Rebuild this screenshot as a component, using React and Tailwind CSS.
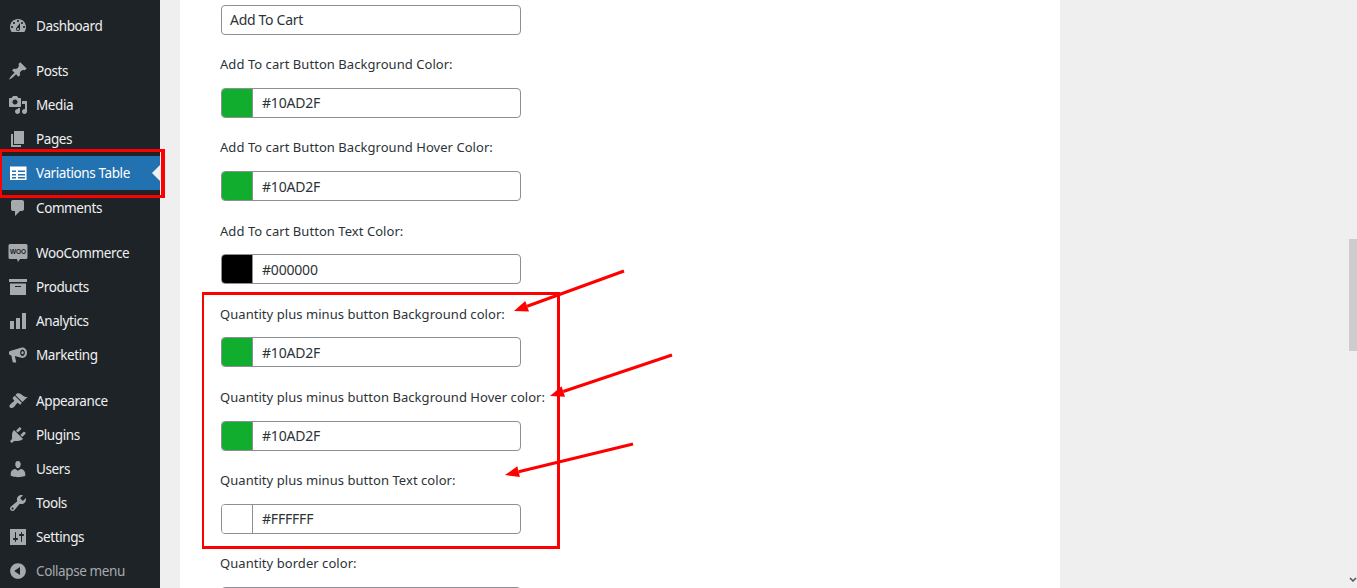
const font = { fontFamily: '"Noto Sans", "Open Sans", sans-serif' };

const P = ({ d, className = "" }) => (
  <svg viewBox="0 0 20 20" className={`w-5 h-5 fill-[#a7aaad] ${className}`}><path d={d} fillRule="evenodd" /></svg>
);

const icons = {
  dashboard: <P d="M3.76 16h12.48c1.1-1.37 1.76-3.11 1.76-5 0-4.42-3.58-8-8-8s-8 3.58-8 8c0 1.89.66 3.63 1.76 5zM10 4c.55 0 1 .45 1 1s-.45 1-1 1-1-.45-1-1 .45-1 1-1zM6 6c.55 0 1 .45 1 1s-.45 1-1 1-1-.45-1-1 .45-1 1-1zm8 0c.55 0 1 .45 1 1s-.45 1-1 1-1-.45-1-1 .45-1 1-1zm-5.37 5.55L12 7v6c0 1.1-.9 2-2 2s-2-.9-2-2c0-.57.24-1.08.63-1.45zM4 10c.55 0 1 .45 1 1s-.45 1-1 1-1-.45-1-1 .45-1 1-1zm12 0c.55 0 1 .45 1 1s-.45 1-1 1-1-.45-1-1 .45-1 1-1zm-5 3c0-.55-.45-1-1-1s-1 .45-1 1 .45 1 1 1 1-.45 1-1z" />,
  posts: <P d="M10.44 3.02l1.82-1.82 6.36 6.35-1.83 1.82c-1.05-.68-2.48-.57-3.41.36l-.75.75c-.92.93-1.04 2.35-.35 3.41l-1.83 1.82-2.41-2.41-2.8 2.79c-.42.42-3.38 2.71-3.8 2.29s1.86-3.39 2.28-3.81l2.79-2.79L4.1 9.36l1.83-1.82c1.05.69 2.48.57 3.4-.36l.75-.75c.93-.92 1.05-2.35.36-3.41z" />,
  media: <P d="M13 11V4c0-.55-.45-1-1-1h-1.67L9 1H5L3.67 3H2c-.55 0-1 .45-1 1v7c0 .55.45 1 1 1h10c.55 0 1-.45 1-1zM7 4.5c1.38 0 2.5 1.12 2.5 2.5S8.38 9.5 7 9.5 4.5 8.38 4.5 7 5.62 4.5 7 4.5zM14 6h5v10.5c0 1.38-1.12 2.5-2.5 2.5S14 17.88 14 16.5s1.12-2.5 2.5-2.5c.17 0 .34.02.5.05V9h-3V6zm-4 8.05V13h2v3.5c0 1.38-1.12 2.5-2.5 2.5S7 17.88 7 16.5 8.12 14 9.5 14c.17 0 .34.02.5.05z" />,
  pages: <P d="M6 15V2h10v13H6zm-1 1h8v2H3V5h2v11z" />,
  table: (
    <svg viewBox="0 0 20 20" className="w-5 h-5 fill-white">
      <path fillRule="evenodd" d="M2 3.5h16.5V17H2V3.5zM4 7.5V9h4V7.5H4zm6 0V9h7V7.5h-7zM4 11v1.5h4V11H4zm6 0v1.5h7V11h-7zM4 14v1.5h4V14H4zm6 0v1.5h7V14h-7z" />
    </svg>
  ),
  comments: <P d="M5 2h9c1.1 0 2 .9 2 2v7c0 1.1-.9 2-2 2h-2l-5 5v-5H5c-1.1 0-2-.9-2-2V4c0-1.1.9-2 2-2z" />,
  woo: (
    <svg viewBox="0 0 20 20" className="w-5 h-5">
      <path className="fill-[#a7aaad]" d="M2 1h16a1.5 1.5 0 0 1 1.5 1.5v12A1.5 1.5 0 0 1 18 16h-6l-2 3-1-3H2A1.5 1.5 0 0 1 .5 14.5v-12A1.5 1.5 0 0 1 2 1z" />
      <text x="10" y="11" textAnchor="middle" fontSize="6.5" fontWeight="700" fill="#1d2327" fontFamily="Liberation Sans, sans-serif">WOO</text>
    </svg>
  ),
  products: <P d="M19 2v3H1V2h18zM2 6.5h16V18H2V6.5zm11 3.5V9H7v1h6z" />,
  analytics: <P d="M18 18V2h-4v16h4zm-6 0V7H8v11h4zm-6 0v-8H2v8h4z" />,
  marketing: <P d="M14.5 2.5c2.5 0 4.5 2.4 4.5 5.3s-2 5.2-4.5 5.2c-.4 0-.8 0-1.2-.2L6.8 11l1.4 5.7c.1.5-.2.8-.6.8H5.4c-.3 0-.6-.2-.7-.6L3.3 10.4 2 10c-.7-.2-1-.7-1-1.3V7.4c0-.6.4-1.1 1-1.3l11-3.4c.5-.1 1-.2 1.5-.2zm0 2c-1.3 0-2.4 1.5-2.4 3.3s1.1 3.2 2.4 3.2 2.4-1.4 2.4-3.2-1.1-3.3-2.4-3.3zm0 1.8c.7 0 1.2.7 1.2 1.5s-.5 1.4-1.2 1.4-1.2-.6-1.2-1.4.5-1.5 1.2-1.5z" />,
  appearance: <P d="M14.48 11.06L7.41 3.99l1.5-1.5c.5-.56 2.3-.47 3.51.32 1.21.8 1.43 1.28 2.91 2.1 1.18.64 2.45 1.26 4.45.85zm-.71.71L6.7 4.7 4.93 6.47c-.39.39-.39 1.02 0 1.41l1.06 1.06c.39.39.39 1.03 0 1.42-.6.6-1.43 1.11-2.21 1.69-.35.26-.7.53-1.01.84C1.43 13.71.96 15.65 1.91 16.61c.96.96 2.9.49 4.51-1.12.31-.31.58-.66.85-1.02.57-.78 1.08-1.61 1.69-2.21.39-.39 1.02-.39 1.41 0l1.06 1.06c.39.39 1.02.39 1.41 0z" />,
  plugins: <P d="M13.11 4.36L9.87 7.6 8 5.73l3.24-3.24c.35-.34 1.05-.2 1.56.32.52.51.66 1.21.31 1.55zm-8 1.77l.91-1.12 9.01 9.01-1.19.84c-.71.71-2.63 1.16-3.82 1.16H6.14L4.9 17.26c-.59.59-1.54.59-2.12 0-.59-.58-.59-1.53 0-2.12l1.24-1.24v-3.88c0-1.13.4-3.19 1.09-3.89zm7.26 3.97l3.24-3.24c.34-.35 1.04-.21 1.55.31.52.51.66 1.21.31 1.55l-3.24 3.25z" />,
  users: <P d="M10 9.25c-2.27 0-2.73-3.44-2.73-3.44C7 4.02 7.82 2 9.97 2c2.16 0 2.98 2.02 2.71 3.81 0 0-.41 3.44-2.68 3.44zm0 2.57L12.72 10c2.39 0 4.52 2.33 4.52 4.53v2.49s-3.65 1.13-7.24 1.13c-3.65 0-7.24-1.13-7.24-1.13v-2.49c0-2.25 1.94-4.48 4.47-4.48z" />,
  tools: <P d="M16.68 9.77c-1.34 1.34-3.3 1.67-4.95.99l-5.41 6.52c-.99.99-2.59.99-3.58 0s-.99-2.59 0-3.57l6.52-5.42c-.68-1.65-.35-3.61.99-4.95 1.28-1.28 3.12-1.62 4.72-1.06l-2.89 2.89 2.82 2.82 2.86-2.87c.53 1.58.18 3.39-1.08 4.67zM3.81 16.21c.4.39 1.04.39 1.43 0 .4-.4.4-1.04 0-1.43-.39-.4-1.03-.4-1.43 0-.39.39-.39 1.03 0 1.43z" />,
  settings: <P d="M18 2v16H2V2h16zM8 11h1c.55 0 1 .45 1 1s-.45 1-1 1H8v1.5c0 .28-.22.5-.5.5s-.5-.22-.5-.5V13H6c-.55 0-1-.45-1-1s.45-1 1-1h1V5.5c0-.28.22-.5.5-.5s.5.22.5.5V11zm5-2h-1c-.55 0-1-.45-1-1s.45-1 1-1h1V5.5c0-.28.22-.5.5-.5s.5.22.5.5V7h1c.55 0 1 .45 1 1s-.45 1-1 1h-1v5.5c0 .28-.22.5-.5.5s-.5-.22-.5-.5V9z" />,
  collapse: <P d="M10 2.16c4.33 0 7.84 3.51 7.84 7.84s-3.51 7.84-7.84 7.84S2.16 14.33 2.16 10 5.71 2.16 10 2.16zm2 11.72V6.12L6.18 9.97z" />,
};

const Item = ({ icon, label, active, muted, sep }) => (
  <div className={`relative flex items-center h-[34px] ${sep ? "mt-[11px]" : ""} ${active ? "bg-[#2271b1] text-white" : muted ? "text-[#a7aaad]" : "text-[#f0f0f1]"}`}>
    <span className="w-9 pl-[8px] flex items-center justify-start shrink-0">{icons[icon]}</span>
    <span className="text-[13.5px] tracking-[-0.4px] leading-[18px] whitespace-nowrap">{label}</span>
    {active && <span className="absolute right-0 top-[9px] border-y-[8px] border-r-[8px] border-y-transparent border-r-[#f0f0f1]" />}
  </div>
);

const Sidebar = () => (
  <aside className="w-40 shrink-0 bg-[#1d2327] pt-[9px]">
    <Item icon="dashboard" label="Dashboard" />
    <Item icon="posts" label="Posts" sep />
    <Item icon="media" label="Media" />
    <Item icon="pages" label="Pages" />
    <Item icon="table" label="Variations Table" active />
    <div className="h-px" />
    <Item icon="comments" label="Comments" />
    <Item icon="woo" label="WooCommerce" sep />
    <Item icon="products" label="Products" />
    <Item icon="analytics" label="Analytics" />
    <Item icon="marketing" label="Marketing" />
    <div className="h-px" />
    <Item icon="appearance" label="Appearance" sep />
    <Item icon="plugins" label="Plugins" />
    <Item icon="users" label="Users" />
    <Item icon="tools" label="Tools" />
    <Item icon="settings" label="Settings" />
    <Item icon="collapse" label="Collapse menu" muted />
  </aside>
);

const ColorField = ({ label, color, value }) => (
  <div className="pt-[19.25px] mb-[0.15px]">
    <div className="h-5 mb-[13.75px] text-[13px] leading-5 tracking-[0.05px] text-[#2c3338] whitespace-nowrap">{label}</div>
    <div className="flex h-[30px] w-[300px] ml-px border border-[#8c8f94] rounded-[4px] overflow-hidden bg-white">
      <span className={`w-[31px] shrink-0 border-r border-[#8c8f94] ${color}`} />
      <span className="pl-[9px] pt-[0.4px] text-[14px] leading-[28px] tracking-[-0.2px] text-[#2c3338]">{value}</span>
    </div>
  </div>
);

const fields = [
  ["Add To cart Button Background Color:", "bg-[#10ad2f]", "#10AD2F"],
  ["Add To cart Button Background Hover Color:", "bg-[#10ad2f]", "#10AD2F"],
  ["Add To cart Button Text Color:", "bg-black", "#000000"],
  ["Quantity plus minus button Background color:", "bg-[#10ad2f]", "#10AD2F"],
  ["Quantity plus minus button Background Hover color:", "bg-[#10ad2f]", "#10AD2F"],
  ["Quantity plus minus button Text color:", "bg-white", "#FFFFFF"],
  ["Quantity border color:", "bg-white", ""],
];

const Arrow = ({ x1, y1, x2, y2 }) => {
  const a = Math.atan2(y2 - y1, x2 - x1);
  const L = 14, W = 5.5;
  const bx = x2 - L * Math.cos(a), by = y2 - L * Math.sin(a);
  const px = -Math.sin(a) * W, py = Math.cos(a) * W;
  return (
    <g>
      <line x1={x1} y1={y1} x2={bx} y2={by} stroke="#ff0000" strokeWidth="3" />
      <polygon points={`${x2},${y2} ${bx + px},${by + py} ${bx - px},${by - py}`} fill="#ff0000" />
    </g>
  );
};

export default function App() {
  return (
    <div className="relative flex h-[588px] w-[1357px] overflow-hidden bg-[#efefef]" style={font}>
      <Sidebar />
      <main className="ml-5 w-[880px] h-[700px] bg-white pl-10 pt-[5px] shrink-0">
        <div className="h-[30px] w-[300px] ml-px border border-[#8c8f94] rounded-[4px] bg-white pl-2 text-[14px] leading-[28px] tracking-[-0.3px] text-[#2c3338]">Add To Cart</div>
        {fields.map(([l, c, v]) => <ColorField key={l} label={l} color={c} value={v} />)}
      </main>

      {/* scrollbar */}
      <div className="absolute right-0 top-[239px] w-2 h-[112px] bg-[#cdcdcd]" />
      <svg viewBox="0 0 8 6" className="absolute right-0 top-[577px] w-2 h-[6px]"><path d="M1 1l3 3 3-3" fill="none" stroke="#505050" strokeWidth="1.5" /></svg>

      {/* annotations */}
      <div className="absolute left-0 top-[149px] w-[165px] h-[49px] border-[3px] border-l-2 border-r-4 border-[#ff0000]" />
      <div className="absolute left-[202px] top-[292px] w-[358px] h-[257px] border-[3px] border-l-2 border-[#ff0000]" />
      <svg className="absolute inset-0 w-[1357px] h-[588px] pointer-events-none">
        <Arrow x1={624} y1={271} x2={514} y2={311} />
        <Arrow x1={672} y1={355} x2={550} y2={396} />
        <Arrow x1={633} y1={444} x2={505} y2={475} />
      </svg>
    </div>
  );
}
